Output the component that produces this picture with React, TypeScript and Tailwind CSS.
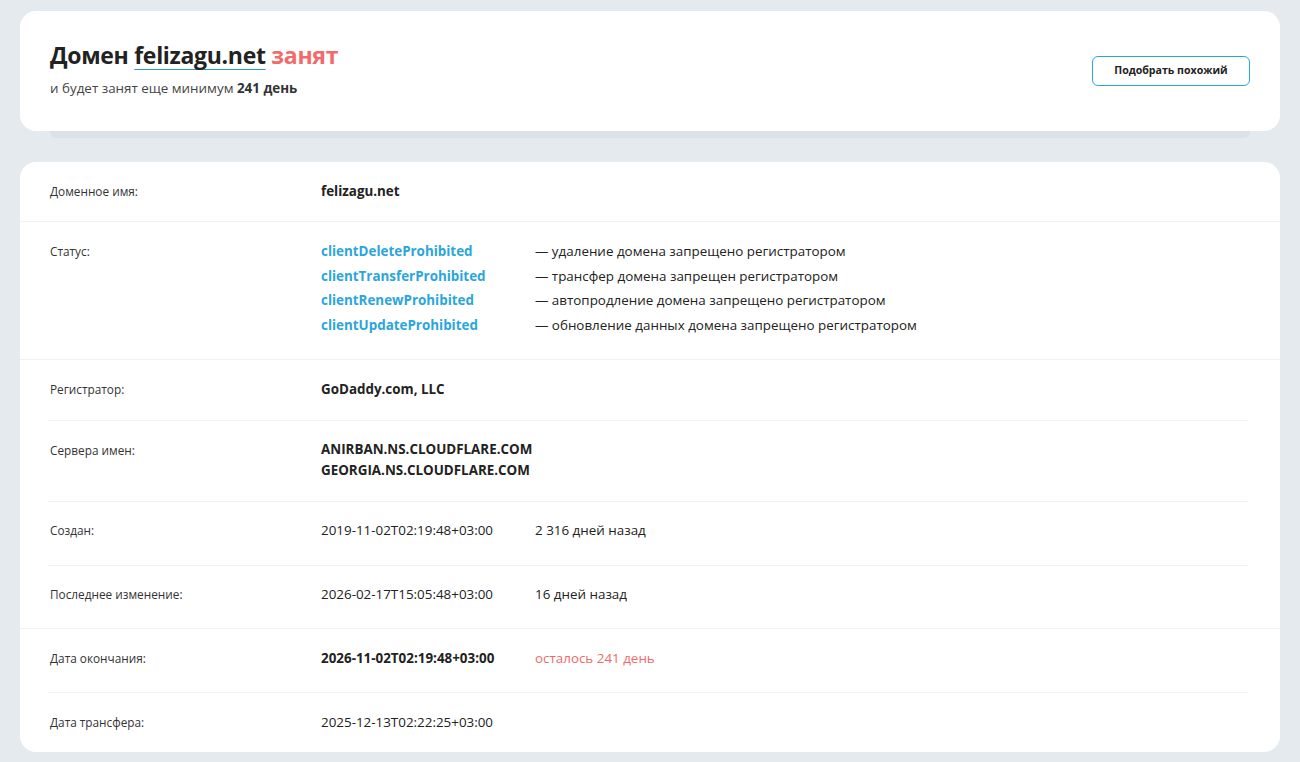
import React from "react"

interface Row {
  label: string
  full?: boolean
  pad: string
  content: React.ReactNode
}

const statuses = [
  ["clientDeleteProhibited", "— удаление домена запрещено регистратором"],
  ["clientTransferProhibited", "— трансфер домена запрещен регистратором"],
  ["clientRenewProhibited", "— автопродление домена запрещено регистратором"],
  ["clientUpdateProhibited", "— обновление данных домена запрещено регистратором"],
]

function DateCell({ date, note, bold, red }: { date: string; note?: string; bold?: boolean; red?: boolean }) {
  return (
    <div className="flex leading-[18px]">
      <span className={`w-[214px] ${bold ? "font-bold" : ""}`}>{date}</span>
      {note && <span className={red ? "text-[#f06a6a]" : ""}>{note}</span>}
    </div>
  )
}

const rows: Row[] = [
  {
    label: "Доменное имя:",
    full: true,
    pad: "pt-5 pb-[21px]",
    content: <div className="font-bold leading-[18px]">felizagu.net</div>,
  },
  {
    label: "Статус:",
    full: true,
    pad: "pt-5 pb-[25px]",
    content: (
      <div className="flex flex-col gap-[6.7px]">
        {statuses.map(([code, text]) => (
          <div key={code} className="flex leading-[18px]">
            <span className="w-[214px] font-bold text-[#2aa6dc]">{code}</span>
            <span>{text}</span>
          </div>
        ))}
      </div>
    ),
  },
  {
    label: "Регистратор:",
    pad: "pt-5 pb-[22px]",
    content: <div className="font-bold leading-[18px]">GoDaddy.com, LLC</div>,
  },
  {
    label: "Сервера имен:",
    pad: "pt-5 pb-[20px]",
    content: (
      <div className="-mt-[2px] font-bold leading-[21px]">
        <div>ANIRBAN.NS.CLOUDFLARE.COM</div>
        <div>GEORGIA.NS.CLOUDFLARE.COM</div>
      </div>
    ),
  },
  {
    label: "Создан:",
    pad: "pt-[19px] pb-[26px]",
    content: <DateCell date="2019-11-02T02:19:48+03:00" note="2 316 дней назад" />,
  },
  {
    label: "Последнее изменение:",
    full: true,
    pad: "pt-[19px] pb-[25px]",
    content: <DateCell date="2026-02-17T15:05:48+03:00" note="16 дней назад" />,
  },
  {
    label: "Дата окончания:",
    pad: "pt-5 pb-[25px]",
    content: <DateCell date="2026-11-02T02:19:48+03:00" note="осталось 241 день" bold red />,
  },
  {
    label: "Дата трансфера:",
    pad: "pt-5 pb-[21px]",
    content: <DateCell date="2025-12-13T02:22:25+03:00" />,
  },
]

export default function App() {
  return (
    <div
      className="min-h-[762px] bg-[#e5eaef] px-5 pt-[11px] pb-[10px] text-[#222]"
      style={{ fontFamily: '"Open Sans", "Noto Sans", sans-serif' }}
    >
      <div>
        <div className="flex h-[120px] items-start justify-between rounded-2xl bg-white px-[30px]">
          <div className="pt-[28px]">
            <h1 className="text-[23px] font-bold leading-8 tracking-[-0.3px]">
              Домен{" "}
              <span className="underline decoration-[#2b9bc9] decoration-1 underline-offset-[5px]">felizagu.net</span>{" "}
              <span className="text-[#f26a6a]">занят</span>
            </h1>
            <p className="mt-[8px] text-[13.4px] leading-[18px] text-[#444]">
              и будет занят еще минимум <b className="text-[#333]">241 день</b>
            </p>
          </div>
          <button className="mt-[45px] h-[30px] w-[158px] rounded-md border border-[#27a7d8] text-[10.6px] font-bold text-[#222]">
            Подобрать похожий
          </button>
        </div>
        <div className="mx-[30px] h-[7px] rounded-b-md bg-[#dce2e8]" />
      </div>

      <div className="mt-[24px] rounded-2xl bg-white">
        {rows.map((row, i) => (
          <div key={row.label}>
            <div className={`flex px-[30px] ${row.pad}`}>
              <div className="w-[271px] text-[11.8px] leading-[18px] text-[#333]">{row.label}</div>
              <div className="text-[13.4px]">{row.content}</div>
            </div>
            {i < rows.length - 1 && (
              <div className={`h-px bg-[#f0f2f4] ${row.full ? "" : "ml-[28px] mr-[32px]"}`} />
            )}
          </div>
        ))}
      </div>
    </div>
  )
}
